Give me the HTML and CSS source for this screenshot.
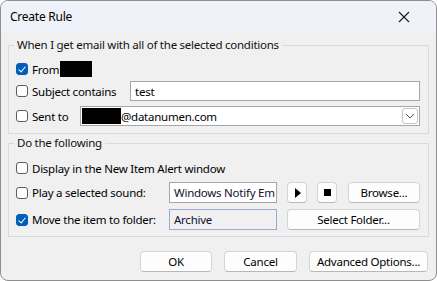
FILE: index.html
```html
<!DOCTYPE html>
<html lang="en">
<head>
    <meta charset="UTF-8">
    <title>Create Rule</title>
    <link rel="stylesheet" href="styles.css">
</head>
<body>
    <div class="window">
        <div class="titlebar">
            <span class="title">Create Rule</span>
            <svg class="close" width="12" height="12" viewBox="0 0 12 12">
                <path d="M1 1 L11 11 M11 1 L1 11" stroke="#1a1a1a" stroke-width="1.1" fill="none"/>
            </svg>
        </div>

        <div class="content">
            <fieldset class="group conditions">
                <legend>When I get email with all of the selected conditions</legend>
                <div class="row">
                    <span class="check on"></span>
                    <span class="label">From</span>
                    <span class="redact from-redact"></span>
                </div>
                <div class="row subject-row">
                    <span class="check"></span>
                    <span class="label w-subject">Subject contains</span>
                    <div class="textbox grow">test</div>
                </div>
                <div class="row sent-row">
                    <span class="check"></span>
                    <span class="label w-sent">Sent to</span>
                    <div class="combo grow">
                        <span class="redact sent-redact"></span>
                        <span class="combo-text">@datanumen.com</span>
                        <span class="drop">
                            <svg width="10" height="6" viewBox="0 0 10 6">
                                <path d="M1 1 L5 5 L9 1" stroke="#555" stroke-width="1" fill="none"/>
                            </svg>
                        </span>
                    </div>
                </div>
            </fieldset>

            <fieldset class="group actions">
                <legend>Do the following</legend>
                <div class="row">
                    <span class="check"></span>
                    <span class="label">Display in the New Item Alert window</span>
                </div>
                <div class="row sound-row">
                    <span class="check"></span>
                    <span class="label w-action">Play a selected sound:</span>
                    <div class="textbox field">Windows Notify Em</div>
                    <button class="btn icon-btn play"><span class="tri"></span></button>
                    <button class="btn icon-btn stop"><span class="sq"></span></button>
                    <button class="btn browse">Browse...</button>
                </div>
                <div class="row folder-row">
                    <span class="check on"></span>
                    <span class="label w-action">Move the item to folder:</span>
                    <div class="textbox field readonly">Archive</div>
                    <button class="btn select-folder">Select Folder...</button>
                </div>
            </fieldset>

            <div class="buttons">
                <button class="btn ok">OK</button>
                <button class="btn cancel">Cancel</button>
                <button class="btn advanced">Advanced Options...</button>
            </div>
        </div>
    </div>
</body>
</html>
```

FILE: styles.css
```css
body {
    margin: 0;
    background: #fff;
    font-family: "Noto Sans", sans-serif;
    font-size: 11.5px;
    letter-spacing: -0.25px;
    color: #000;
}
.window {
    width: 437px;
    height: 281px;
    box-sizing: border-box;
    border: 1px solid #8e8e8e;
    border-radius: 8px;
    background: #f0f0f0;
    overflow: hidden;
}
.titlebar {
    height: 31px;
    background: #eff2f9;
    display: flex;
    align-items: center;
    padding-left: 9px;
}
.title {
    font-size: 12px;
}
.close {
    margin-left: auto;
    margin-right: 26px;
}
.content {
    padding: 0 7px;
}
.group {
    margin: 0;
    border: 1px solid #dadada;
    padding: 0 8px 7px 7px;
}
.group legend {
    padding: 0 3px;
    margin-left: -2px;
    line-height: 16px;
    color: #111;
}
.conditions {
    margin-top: 5px;
    padding-top: 6px;
}
.actions {
    margin-top: 1px;
    padding-top: 7px;
    padding-bottom: 6px;
}
.row {
    display: flex;
    align-items: center;
    height: 20px;
}
.subject-row {
    margin-top: 2px;
}
.sent-row {
    margin-top: 5px;
}
.sound-row {
    margin-top: 4px;
    height: 21px;
}
.folder-row {
    margin-top: 6px;
    height: 21px;
}
.check {
    width: 10px;
    height: 10px;
    border: 1px solid #5d5d5d;
    border-radius: 3px;
    background: #fff;
    margin-right: 4px;
    flex: none;
    position: relative;
}
.check.on {
    background: #005fb8;
    border-color: #005fb8;
}
.check.on::after {
    content: "";
    position: absolute;
    left: 3px;
    top: 1px;
    width: 3px;
    height: 6px;
    border: solid #fff;
    border-width: 0 1px 1px 0;
    transform: rotate(40deg);
}
.label {
    white-space: nowrap;
    flex: none;
}
.w-subject {
    width: 98px;
}
.w-sent {
    width: 48px;
}
.w-action {
    width: 137px;
}
.redact {
    display: inline-block;
    background: #000;
    height: 16px;
}
.from-redact {
    width: 32px;
    margin-left: 1px;
}
.grow {
    flex: 1;
}
.textbox {
    height: 20px;
    box-sizing: border-box;
    border: 1px solid #a6a6a6;
    background: #fff;
    padding: 0 4px;
    display: flex;
    align-items: center;
    white-space: nowrap;
    overflow: hidden;
}
.field {
    width: 108px;
    flex: none;
    height: 21px;
    color: #101030;
}
.readonly {
    background: #f0f0f0;
    border-color: #9aaad0;
}
.combo {
    height: 20px;
    box-sizing: border-box;
    border: 1px solid #a6a6a6;
    background: #fff;
    display: flex;
    align-items: center;
    padding-left: 1px;
    padding-right: 1px;
}
.sent-redact {
    width: 39px;
}
.combo-text {
    flex: 1;
}
.drop {
    width: 14px;
    height: 14px;
    border: 1px solid #c6c6c6;
    border-radius: 3px;
    display: flex;
    align-items: center;
    justify-content: center;
}
.btn {
    font-family: "Noto Sans", sans-serif;
    font-size: 11.5px;
    letter-spacing: -0.25px;
    color: #000;
    background: #fdfdfd;
    border: 1px solid #d4d4d4;
    border-bottom-color: #b8b8b8;
    border-radius: 4px;
    height: 21px;
    padding: 0;
    box-sizing: border-box;
    display: flex;
    align-items: center;
    justify-content: center;
}
.icon-btn {
    width: 20px;
    flex: none;
}
.play {
    margin-left: 10px;
}
.stop {
    margin-left: 10px;
}
.tri {
    width: 0;
    height: 0;
    border-left: 6px solid #000;
    border-top: 5px solid transparent;
    border-bottom: 5px solid transparent;
    margin-left: 1px;
}
.sq {
    width: 7px;
    height: 7px;
    background: #000;
}
.browse {
    margin-left: 11px;
    flex: 1;
}
.select-folder {
    margin-left: 10px;
    flex: 1;
}
.buttons {
    display: flex;
    justify-content: flex-end;
    gap: 12px;
    margin-top: 14px;
    margin-right: 1px;
}
.ok {
    width: 72px;
}
.cancel {
    width: 73px;
}
.advanced {
    width: 119px;
}
```
